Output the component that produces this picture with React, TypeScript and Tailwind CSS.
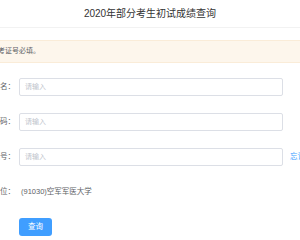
import React from "react";

const FONT = { fontFamily: '"Liberation Sans", Arial, "Noto Sans CJK SC", sans-serif' };

function Row({ label, placeholder, link }: { label: string; placeholder: string; link?: string }) {
  return (
    <div className="flex items-center h-[18px]">
      <div className="w-[60px] ml-[-45px] text-right text-[7.5px] text-[#606266] whitespace-nowrap shrink-0">{label}</div>
      <div className="ml-[4px] w-[264px] h-[18px] shrink-0 border border-[#dcdfe6] rounded-[2px] bg-white flex items-center pl-[5px] text-[7px] text-[#c0c4cc]">
        {placeholder}
      </div>
      {link && <div className="ml-[7px] text-[7.5px] text-[#409eff] whitespace-nowrap">{link}</div>}
    </div>
  );
}

export default function App() {
  return (
    <div className="w-[300px] h-[240px] bg-white overflow-hidden" style={FONT}>
      <div className="h-[28px] flex items-center justify-center border-b border-[#f2f2f2] text-[10px] text-[#333333]">
        2020年部分考生初试成绩查询
      </div>
      <div className="mt-[12px] h-[23px] bg-[#fdf6ec] border-y border-[#faecd8] flex items-center">
        <span className="ml-[-9px] text-[7px] text-[#606266] whitespace-nowrap">准考证号必填。</span>
      </div>
      <div className="mt-[15px] flex flex-col gap-[17px]">
        <Row label="姓名：" placeholder="请输入" />
        <Row label="身份证号码：" placeholder="请输入" />
        <Row label="准考证号：" placeholder="请输入" link="忘记准考证号？" />
        <div className="flex items-center h-[18px]">
          <div className="w-[60px] ml-[-45px] text-right text-[7.5px] text-[#606266] whitespace-nowrap shrink-0">报考单位：</div>
          <div className="ml-[6px] text-[7.5px] text-[#606266] whitespace-nowrap">(91030)空军军医大学</div>
        </div>
        <div className="flex">
          <button className="ml-[19px] w-[33px] h-[18px] rounded-[3px] bg-[#409eff] text-white text-[7.5px] flex items-center justify-center">
            查询
          </button>
        </div>
      </div>
    </div>
  );
}
